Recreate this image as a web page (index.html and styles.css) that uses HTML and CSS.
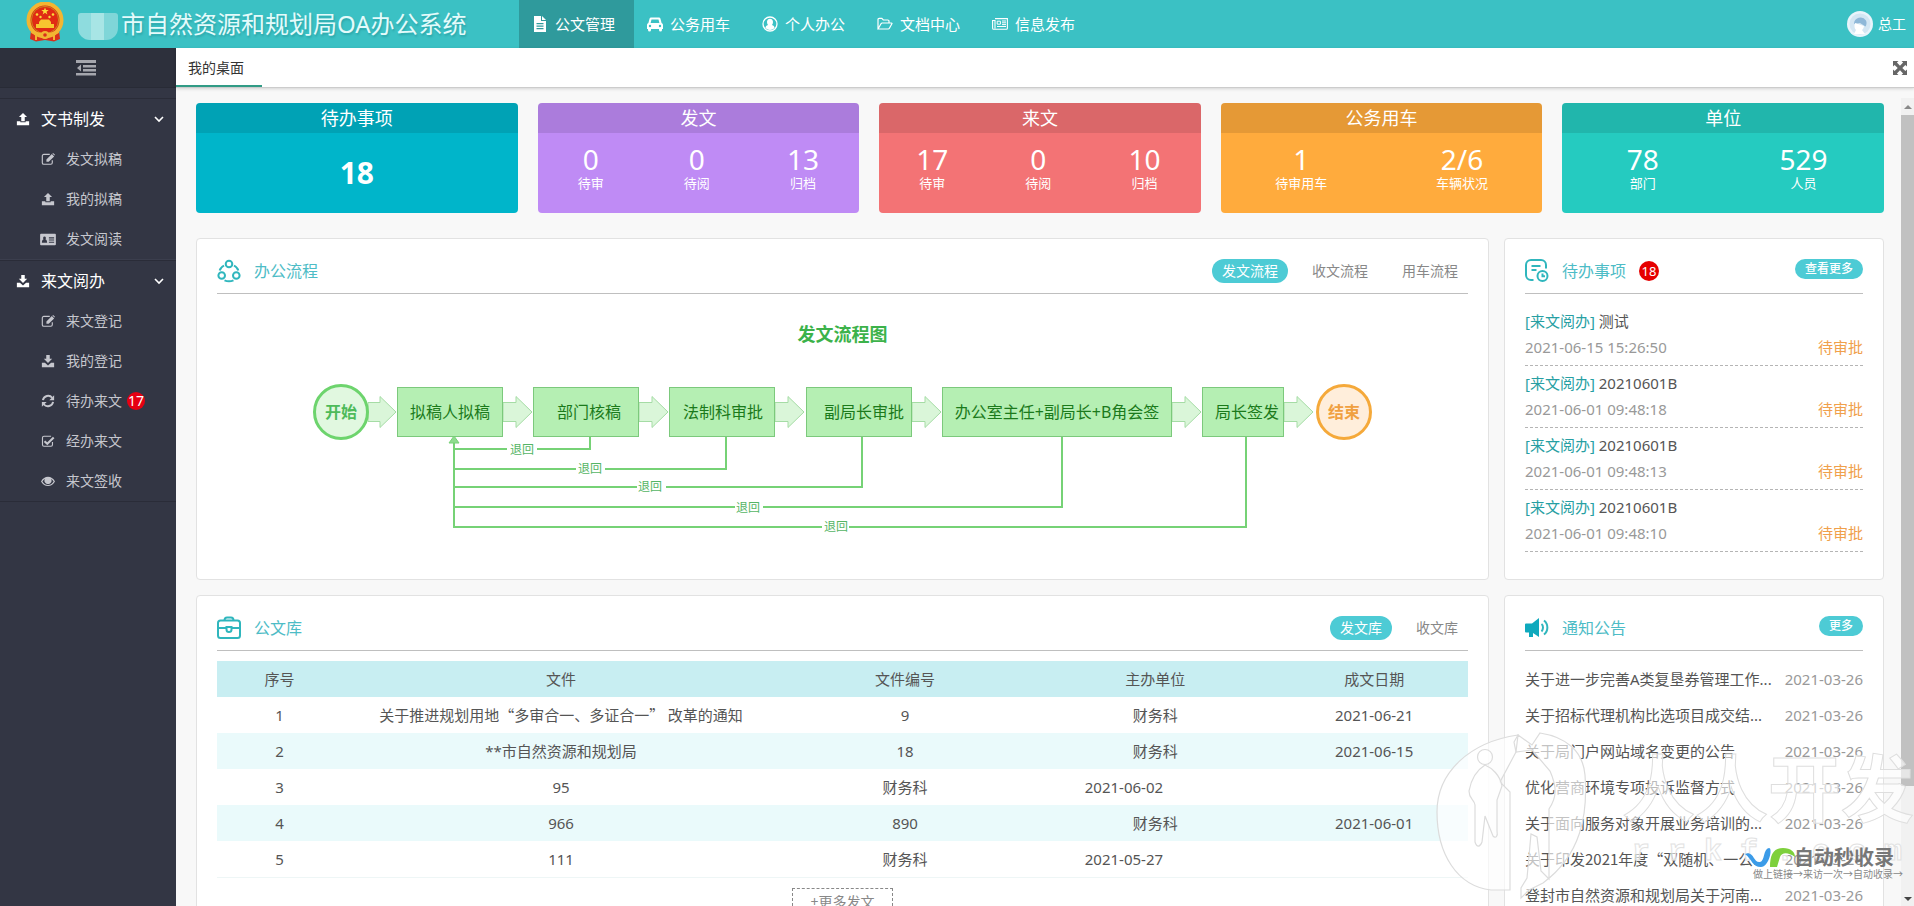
FILE: index.html
```html
<!DOCTYPE html>
<html lang="zh-CN">
<head>
  <meta charset="UTF-8" />
  <title>市自然资源和规划局OA办公系统</title>
  <link rel="stylesheet" href="styles.css">
</head>
<body>

<!-- 图标 -->
<svg class="sprite" aria-hidden="true">
  <symbol id="i-upload" viewBox="0 0 16 16"><path d="M8 1l4.600 4.800H10V10.500H6V5.800H3.400zM1 10.500h4v1.300h6v-1.300h4V15H1z"/></symbol>
  <symbol id="i-download" viewBox="0 0 16 16"><path d="M6 1h4v4.500h2.800L8 10.200 3.200 5.500H6zM1 10h3.500L8 13l3.500-3H15v5H1z"/></symbol>
  <symbol id="i-edit" viewBox="0 0 16 16"><path d="M10 2.700H3.200A1.700 1.700 0 0 0 1.500 4.400v8A1.700 1.700 0 0 0 3.200 14h8a1.700 1.700 0 0 0 1.700-1.700V9.500" fill="none" stroke="currentColor" stroke-width="1.300"/><path d="M6.200 11.200V8.600l6.200-6.200 2.600 2.600-6.200 6.200zM13 1.800l.8-.8 2.200 2.200-.8.900z"/></symbol>
  <symbol id="i-card" viewBox="0 0 18 16"><path fill-rule="evenodd" d="M1 2h16a1 1 0 0 1 1 1v11a1 1 0 0 1-1 1H1a1 1 0 0 1-1-1v-11a1 1 0 0 1 1-1zM10 6v1.300h6V6zM10 8.500v1.300h6V8.500zM10 11v1.200h6V11zM5 5.200a1.700 1.700 0 0 0-1 3c-1.500.4-2 1.800-2 4h6c0-2.200-.5-3.600-2-4a1.700 1.700 0 0 0-1-3z"/></symbol>
  <symbol id="i-refresh" viewBox="0 0 16 16"><path d="M2.200 7A6 6 0 0 1 12.800 4.300M13.800 9A6 6 0 0 1 3.200 11.700" fill="none" stroke="currentColor" stroke-width="2.200"/><path d="M15 1.500V7H9.500zM1 14.500V9h5.500z"/></symbol>
  <symbol id="i-check" viewBox="0 0 16 16"><path d="M11.500 2.600H3.400A1.700 1.700 0 0 0 1.700 4.300v8A1.700 1.700 0 0 0 3.400 14h8a1.700 1.700 0 0 0 1.700-1.700V9" fill="none" stroke="currentColor" stroke-width="1.300"/><path d="M4 8.200l3.200 3L14.500 4" fill="none" stroke="currentColor" stroke-width="2.400"/></symbol>
  <symbol id="i-eye" viewBox="0 0 16 16"><path fill-rule="evenodd" d="M0 8.500C2 5 4.800 3.200 8 3.200s6 1.800 8 5.300c-2 3.400-4.800 5.200-8 5.200S2 11.900 0 8.500zM1.600 8.500C3.200 11.200 5.500 12.500 8 12.500s4.800-1.300 6.400-4c-.8-1.400-1.900-2.500-3-3.200a4 4 0 1 1-6.800 0c-1.100.7-2.200 1.800-3 3.200z"/></symbol>
  <symbol id="i-chevron" viewBox="0 0 10 10"><path d="M1 3l4 4 4-4" fill="none" stroke="currentColor" stroke-width="1.600"/></symbol>
</svg>

<header class="header">
  <div class="brand">
    <svg class="emblem" viewBox="0 0 38 40" aria-hidden="true">
      <path d="M5 28h28l1 9-6 2.500-9-1.500-9 1.500L4 37z" fill="#d9301c"/>
      <circle cx="19" cy="18" r="16.500" fill="#e02a14" stroke="#f2b632" stroke-width="4"/>
      <circle cx="19" cy="18" r="13.600" fill="none" stroke="#c98a1c" stroke-width="1"/>
      <path d="M19 5.500l1 2.600h2.700l-2.200 1.600.9 2.700-2.400-1.700-2.400 1.700.9-2.700-2.200-1.600H18z" fill="#fbdc3c"/>
      <g fill="#fbdc3c"><circle cx="11" cy="12.500" r="1.300"/><circle cx="27" cy="12.500" r="1.300"/><circle cx="14.500" cy="15" r="1.200"/><circle cx="23.500" cy="15" r="1.200"/></g>
      <path d="M13 20l2-2.500h8l2 2.500v2h3v4H10v-4h3z" fill="#f7c62f"/>
      <path d="M6 28c8 4 18 4 26 0l1 3c-9 4-19 4-28 0z" fill="#f2b632"/>
      <circle cx="19" cy="33" r="4" fill="#f2b632"/><circle cx="19" cy="33" r="1.800" fill="#d9301c"/>
      <path d="M10 33v5M28 33v5" stroke="#f2b632" stroke-width="2"/>
    </svg>
    <span class="mosaic"></span>
    <h1 class="title">市自然资源和规划局OA办公系统</h1>
  </div>
  <nav class="nav">
    <a class="nav-item active" href="#">
      <svg class="nav-icon" viewBox="0 0 16 16"><path fill-rule="evenodd" d="M2 0h7v5h5v11H2zM10 0l4 4h-4zM4.500 7v1.200h7V7zM4.500 9.500v1.200h7V9.500zM4.500 12v1.200h7V12z"/></svg>公文管理</a>
    <a class="nav-item" href="#">
      <svg class="nav-icon" viewBox="0 0 16 16"><path fill-rule="evenodd" d="M4 1.500h8a1.500 1.500 0 0 1 1.400 1L14.600 7A2 2 0 0 1 16 9v4h-1v1a1.500 1.500 0 0 1-3 0v-1H4v1a1.500 1.500 0 0 1-3 0v-1H0V9a2 2 0 0 1 1.400-2l1.200-4.500a1.500 1.500 0 0 1 1.400-1zM4.500 3.500L3.600 7h8.800l-.9-3.500zM3 8.800a1.200 1.200 0 1 0 0 2.400 1.200 1.200 0 0 0 0-2.400zM13 8.800a1.200 1.200 0 1 0 0 2.400 1.200 1.200 0 0 0 0-2.400z"/></svg>公务用车</a>
    <a class="nav-item" href="#">
      <svg class="nav-icon" viewBox="0 0 16 16"><circle cx="8" cy="8" r="7" fill="none" stroke="currentColor" stroke-width="1.300"/><path d="M8 2.800c1.900 0 3 1.300 3 3.300 0 1.200-.4 2.200-1 2.900 1.600.4 2.400 1.500 2.600 3A6.400 6.400 0 0 1 8 14a6.400 6.400 0 0 1-4.600-2c.2-1.500 1-2.600 2.600-3-.6-.7-1-1.700-1-2.900 0-2 1.100-3.300 3-3.300z"/></svg>个人办公</a>
    <a class="nav-item" href="#">
      <svg class="nav-icon" viewBox="0 0 16 16"><path d="M1 13V3.500A1.200 1.200 0 0 1 2.200 2.300h2.600L6.300 4h4.500A1.200 1.200 0 0 1 12 5.200V7M1 13l3-5.300q.4-.7 1.200-.7h9.300q.8 0 .4.700l-2.500 4.600q-.4.700-1.200.7z" fill="none" stroke="currentColor" stroke-width="1.200"/></svg>文档中心</a>
    <a class="nav-item" href="#">
      <svg class="nav-icon" viewBox="0 0 16 16"><path d="M3 2.600h12.400v9.700a1 1 0 0 1-1 1H1.600a1 1 0 0 1-1-1V4.500H3v8" fill="none" stroke="currentColor" stroke-width="1.100"/><path d="M5.200 5.200h3.200v3H5.200zM5 10.500h9M10 5h4M10 6.800h4M10 8.600h4" fill="none" stroke="currentColor" stroke-width="1"/></svg>信息发布</a>
  </nav>
  <a class="user" href="#">
    <svg class="avatar" viewBox="0 0 26 26" aria-hidden="true">
      <circle cx="13" cy="13" r="13" fill="#e9f4fb"/><circle cx="13" cy="13" r="10.500" fill="#d3e6f3"/>
      <path d="M7 13a6.500 6.500 0 0 1 12-3.500c1 2 .5 4.500-.5 6L13 12z" fill="#8fb8d8"/><path d="M8 12l9 3c-.5 3-2 4-2 4l3 4H7l2-4c-1.500-1.500-2-4-1-7z" fill="#fff"/>
    </svg>总工</a>
</header>

<div class="body">
  <aside class="sidebar">
    <button class="collapse" aria-label="收起菜单">
      <svg viewBox="0 0 20 16"><path d="M0 0h20v3H0zM7 5h13v2.500H7zM7 9h13v2.500H7zM0 13h20v2.500H0zM5 4.500v7L1 8z"/></svg>
    </button>
    <ul class="menu">
      <li class="group">
        <a class="group-title" href="#"><svg class="icon"><use href="#i-upload"/></svg>文书制发<svg class="chevron"><use href="#i-chevron"/></svg></a>
        <a class="sub" href="#"><svg class="icon"><use href="#i-edit"/></svg>发文拟稿</a>
        <a class="sub" href="#"><svg class="icon"><use href="#i-upload"/></svg>我的拟稿</a>
        <a class="sub" href="#"><svg class="icon"><use href="#i-card"/></svg>发文阅读</a>
      </li>
      <li class="group">
        <a class="group-title" href="#"><svg class="icon"><use href="#i-download"/></svg>来文阅办<svg class="chevron"><use href="#i-chevron"/></svg></a>
        <a class="sub" href="#"><svg class="icon"><use href="#i-edit"/></svg>来文登记</a>
        <a class="sub" href="#"><svg class="icon"><use href="#i-download"/></svg>我的登记</a>
        <a class="sub" href="#"><svg class="icon"><use href="#i-refresh"/></svg>待办来文<span class="count">17</span></a>
        <a class="sub" href="#"><svg class="icon"><use href="#i-check"/></svg>经办来文</a>
        <a class="sub" href="#"><svg class="icon"><use href="#i-eye"/></svg>来文签收</a>
      </li>
    </ul>
  </aside>

  <div class="workspace">
    <div class="tabbar">
      <a class="tab" href="#">我的桌面</a>
      <button class="expand" aria-label="全屏">
        <svg viewBox="0 0 14 14"><path d="M0 0h5.500L3.900 1.600 7 4.700l3.100-3.100L8.500 0H14v5.500l-1.600-1.600L9.300 7l3.100 3.100L14 8.500V14H8.500l1.600-1.600L7 9.300l-3.100 3.100L5.500 14H0V8.500l1.600 1.600L4.700 7 1.600 3.900 0 5.500z"/></svg>
      </button>
    </div>

    <div class="frame">
      <main class="desk">
        <!-- 统计 -->
        <section class="stats">
          <div class="stat cyan">
            <h2>待办事项</h2>
            <div class="stat-body"><strong>18</strong></div>
          </div>
          <div class="stat purple">
            <h2>发文</h2>
            <div class="stat-body third">
              <div class="num"><b>0</b><span>待审</span></div>
              <div class="num"><b>0</b><span>待阅</span></div>
              <div class="num"><b>13</b><span>归档</span></div>
            </div>
          </div>
          <div class="stat red">
            <h2>来文</h2>
            <div class="stat-body third">
              <div class="num"><b>17</b><span>待审</span></div>
              <div class="num"><b>0</b><span>待阅</span></div>
              <div class="num"><b>10</b><span>归档</span></div>
            </div>
          </div>
          <div class="stat orange">
            <h2>公务用车</h2>
            <div class="stat-body half">
              <div class="num"><b>1</b><span>待审用车</span></div>
              <div class="num"><b>2/6</b><span>车辆状况</span></div>
            </div>
          </div>
          <div class="stat green">
            <h2>单位</h2>
            <div class="stat-body half">
              <div class="num"><b>78</b><span>部门</span></div>
              <div class="num"><b>529</b><span>人员</span></div>
            </div>
          </div>
        </section>

        <section class="panels">
          <!-- 办公流程 -->
          <div class="panel">
            <div class="panel-head">
              <svg class="panel-icon" viewBox="0 0 24 24">
                <circle cx="12" cy="5" r="3.300"/><circle cx="4.700" cy="16.500" r="3.300"/><circle cx="19.300" cy="16.500" r="3.300"/>
                <path d="M7 6.500c-2.500 1.500-4 3.500-4.300 5M17 6.500c2.500 1.500 4 3.500 4.300 5M7.500 21.300c3 1.300 6 1.300 9 0"/>
              </svg>
              <h3>办公流程</h3>
              <div class="switch">
                <button class="pill on">发文流程</button>
                <button class="pill">收文流程</button>
                <button class="pill">用车流程</button>
              </div>
            </div>
            <h4 class="flow-title">发文流程图</h4>
            <svg class="flow" width="1061" height="160" viewBox="0 0 1061 160">
              <g class="arrow">
                <path d="M56 22.500h12v-6l16 15.500-16 15.500v-6H56z"/>
                <path d="M191 22.500h13v-6l16 15.500-16 15.500v-6h-13z"/>
                <path d="M327 22.500h13v-6l16 15.500-16 15.500v-6h-13z"/>
                <path d="M463 22.500h13v-6l16 15.500-16 15.500v-6h-13z"/>
                <path d="M600 22.500h13v-6l16 15.500-16 15.500v-6h-13z"/>
                <path d="M860 22.500h13v-6l16 15.500-16 15.500v-6h-13z"/>
                <path d="M972 22.500h13v-6l16 15.500-16 15.500v-6h-13z"/>
              </g>
              <circle class="start" cx="29" cy="32" r="26.500"/>
              <circle class="end" cx="1032" cy="32" r="26.500"/>
              <g class="node">
                <rect x="85.500" y="7.500" width="105" height="49"/>
                <rect x="221.500" y="7.500" width="105" height="49"/>
                <rect x="357.500" y="7.500" width="105" height="49"/>
                <rect x="494.500" y="7.500" width="105" height="49"/>
                <rect x="630.500" y="7.500" width="229" height="49"/>
                <rect x="890.500" y="7.500" width="81" height="49"/>
              </g>
              <g class="back">
                <path d="M142 62v85h792V57M142 69h136V57M142 89h272V57M142 107h408V57M142 127h608V57"/>
              </g>
              <path class="tip" d="M142 56l5 7h-10z"/>
              <g class="gap">
                <rect x="195" y="62" width="30" height="14"/><rect x="264" y="82" width="29" height="14"/>
                <rect x="325" y="100" width="29" height="14"/><rect x="423" y="120" width="28" height="14"/>
                <rect x="510" y="140" width="27" height="14"/>
              </g>
              <g class="label">
                <text x="138" y="38">拟稿人拟稿</text><text x="277" y="38">部门核稿</text>
                <text x="411" y="38">法制科审批</text><text x="552" y="38">副局长审批</text>
                <text x="745" y="38">办公室主任+副局长+B角会签</text><text x="935" y="38">局长签发</text>
              </g>
              <text class="start-text" x="29" y="38">开始</text>
              <text class="end-text" x="1032" y="38">结束</text>
              <g class="back-label">
                <text x="210" y="74">退回</text><text x="278" y="93">退回</text><text x="338" y="111">退回</text>
                <text x="436" y="132">退回</text><text x="524" y="151">退回</text>
              </g>
            </svg>
          </div>

          <!-- 待办事项 -->
          <div class="panel">
            <div class="panel-head">
              <svg class="panel-icon" viewBox="0 0 24 24">
                <path d="M8.500 21H6a5 5 0 0 1-5-5V6a5 5 0 0 1 5-5h10a5 5 0 0 1 5 5v3.500M6.500 7h9M6.500 11h5"/>
                <circle cx="17.500" cy="17" r="5"/><path d="M17.500 14.500v2.800h2.500"/>
              </svg>
              <h3>待办事项</h3>
              <span class="badge">18</span>
              <button class="more">查看更多</button>
            </div>
            <ul class="todo">
              <li><p><a href="#">[来文阅办]</a> 测试</p><p class="meta"><time>2021-06-15 15:26:50</time><em>待审批</em></p></li>
              <li><p><a href="#">[来文阅办]</a> 20210601B</p><p class="meta"><time>2021-06-01 09:48:18</time><em>待审批</em></p></li>
              <li><p><a href="#">[来文阅办]</a> 20210601B</p><p class="meta"><time>2021-06-01 09:48:13</time><em>待审批</em></p></li>
              <li><p><a href="#">[来文阅办]</a> 20210601B</p><p class="meta"><time>2021-06-01 09:48:10</time><em>待审批</em></p></li>
            </ul>
          </div>

          <!-- 公文库 -->
          <div class="panel">
            <div class="panel-head">
              <svg class="panel-icon" viewBox="0 0 24 24">
                <rect x="1" y="4.500" width="22" height="17.500" rx="2.500"/>
                <path d="M7.500 4.500c0-2 1-3 2.500-3h4c1.500 0 2.500 1 2.500 3M1 12h8.500M14.500 12H23M9.500 11v2.500a2.500 2.500 0 0 0 5 0V11z"/>
              </svg>
              <h3>公文库</h3>
              <div class="switch">
                <button class="pill on">发文库</button>
                <button class="pill">收文库</button>
              </div>
            </div>
            <table class="docs">
              <thead>
                <tr><th class="no">序号</th><th class="name">文件</th><th class="code">文件编号</th><th class="dept">主办单位</th><th class="date">成文日期</th></tr>
              </thead>
              <tbody>
                <tr><td class="no">1</td><td class="name quoted">关于推进规划用地“多审合一、多证合一” 改革的通知</td><td class="code">9</td><td class="dept">财务科</td><td class="date">2021-06-21</td></tr>
                <tr><td class="no">2</td><td class="name">**市自然资源和规划局</td><td class="code">18</td><td class="dept">财务科</td><td class="date">2021-06-15</td></tr>
                <tr><td class="no">3</td><td class="name">95</td><td class="dept">财务科</td><td class="date">2021-06-02</td></tr>
                <tr><td class="no">4</td><td class="name">966</td><td class="code">890</td><td class="dept">财务科</td><td class="date">2021-06-01</td></tr>
                <tr><td class="no">5</td><td class="name">111</td><td class="dept">财务科</td><td class="date">2021-05-27</td></tr>
              </tbody>
            </table>
            <button class="load-more">+更多发文</button>
          </div>

          <!-- 通知公告 -->
          <div class="panel">
            <div class="panel-head">
              <svg class="panel-icon" viewBox="0 0 24 24">
                <path class="horn" d="M1 7.500h6L14 2v19l-6-4v4H4v-4.500H1a1 1 0 0 1-1-1v-7a1 1 0 0 1 1-1z"/>
                <path d="M16.500 8c2 1.500 2 5.500 0 7.500M19 4.500c4.500 3.500 4.500 10.500 0 14"/>
              </svg>
              <h3>通知公告</h3>
              <button class="more">更多</button>
            </div>
            <ul class="notice">
              <li><a href="#">关于进一步完善A类复垦券管理工作...</a><time>2021-03-26</time></li>
              <li><a href="#">关于招标代理机构比选项目成交结...</a><time>2021-03-26</time></li>
              <li><a href="#">关于局门户网站域名变更的公告</a><time>2021-03-26</time></li>
              <li><a href="#">优化营商环境专项投诉监督方式</a><time>2021-03-26</time></li>
              <li><a href="#">关于面向服务对象开展业务培训的...</a><time>2021-03-26</time></li>
              <li><a class="quoted" href="#">关于印发2021年度“双随机、一公...</a><time>2021-03-26</time></li>
              <li><a href="#">登封市自然资源和规划局关于河南...</a><time>2021-03-26</time></li>
            </ul>
          </div>
        </section>
      </main>

      <div class="scrollbar" aria-hidden="true">
        <span class="scroll-up"></span>
        <span class="scroll-thumb"></span>
        <span class="scroll-down"></span>
      </div>
    </div>
  </div>
</div>

<!-- 水印 -->
<svg class="watermark" width="484" height="186" viewBox="0 0 484 186" aria-hidden="true">
  <g fill="#fff" fill-opacity=".65" stroke="#dcdcdc" stroke-width="1.200">
    <path d="M88 15C40 22 7 52 7 92c0 42 20 74 54 78h19V72L70 62 86 32l-2-10z"/>
    <path d="M88 15l14 10 8-12c26 4 43 18 45 42 3 40-4 80-42 108l-14 7-8 8V168l6-10 4-44 6 3 4 34 8 8 0-70c8-12 8-22 1-38L102 30 86 32z"/>
    <circle cx="55" cy="37" r="7.500"/>
    <path d="M55 45c-8 5-14 15-16 26 0 8 5 8 6 14v37c2 6 5 5 7 0l3-26 8 20c3 3 5 0 4-5V80l5-14C70 55 62 48 55 45z"/>
  </g>
  <text class="wm-name" x="192" y="96">人人开发</text>
  <text class="wm-site" x="202" y="140">r r k f . c o m</text>
  <path d="M315 134c9-4 8 9 15 8 5-1 3-13 9-14 4 0 0 19-8 19-9 0-9-8-16-13z" fill="#3b9be8"/>
  <path d="M340 147c0-13 4-19 13-19 8 0 12 4 12 9-7-5-13-5-15 0l-3 10z" fill="#7ed03c"/>
  <text class="logo-name" x="364" y="145">自动秒收录</text>
  <text class="logo-sub" x="323" y="158">做上链接→来访一次→自动收录→</text>
</svg>

</body>
</html>
```
FILE: styles.css
```css
* {
  box-sizing: border-box;
  margin: 0;
  padding: 0;
}

body {
  height: 100vh;
  display: flex;
  flex-direction: column;
  overflow: hidden;
  font-family: "Noto Sans", "Noto Sans CJK SC", sans-serif;
  font-size: 14px;
  line-height: 24px;
  color: #555;
  background: #f8f8f8;
}

a {
  color: inherit;
  text-decoration: none;
}

ul {
  list-style: none;
}

button {
  border: none;
  background: none;
  font: inherit;
  color: inherit;
  cursor: pointer;
}

svg {
  fill: currentColor;
  flex: none;
}

.sprite {
  position: absolute;
  width: 0;
  height: 0;
}

/* 顶部 */
.header {
  display: flex;
  flex: none;
  height: 48px;
  background: #3bc1c4;
  color: #fff;
}

.brand {
  display: flex;
  align-items: center;
  width: 519px;
  padding-left: 26px;
}

.emblem {
  width: 38px;
  height: 40px;
  margin-bottom: 4px;
}

.mosaic {
  width: 40px;
  height: 27px;
  margin: 4px 3px 0 14px;
  border-radius: 3px 3px 12px 12px;
  background: linear-gradient(90deg, #8edcde 32%, #a8e5e5 32%, #a8e5e5 64%, #7fd6d8 64%);
}

.title {
  font-size: 24px;
  font-weight: normal;
  line-height: 48px;
  color: #e4fbfb;
  text-shadow: 1px 2px 2px rgba(0,90,95,0.25);
  white-space: nowrap;
}

.nav {
  display: flex;
  flex: 1;
}

.nav-item {
  display: flex;
  align-items: center;
  width: 115px;
  padding-left: 13px;
  font-size: 15px;
  white-space: nowrap;
}

.nav-item.active {
  background: #2f9a9c;
}

.nav-icon {
  width: 16px;
  height: 16px;
  margin-right: 7px;
}

.user {
  display: flex;
  align-items: center;
  gap: 5px;
  padding-right: 8px;
}

.avatar {
  width: 26px;
  height: 26px;
}

.body {
  display: flex;
  flex: 1;
  min-height: 0;
}

/* 左侧菜单 */
.sidebar {
  flex: none;
  width: 176px;
  background: #333644;
  color: #fff;
}

.collapse {
  display: flex;
  align-items: center;
  justify-content: center;
  width: 100%;
  height: 40px;
  padding-right: 4px;
  background: #2d303c;
  border-bottom: 1px solid #282b36;
  color: #a5a6ad;
}

.collapse svg {
  width: 20px;
  height: 16px;
}

.menu {
  padding-top: 10px;
}

.group {
  border-top: 1px solid #2a2c38;
  border-bottom: 1px solid #3b3e4d;
}

.group:last-child {
  border-bottom-color: #2a2c38;
}

.group-title {
  display: flex;
  align-items: center;
  height: 40px;
  padding: 0 12px 0 15px;
  font-size: 16px;
}

.group-title .icon {
  margin-right: 10px;
}

.chevron {
  width: 10px;
  height: 10px;
  margin-left: auto;
}

.icon {
  width: 16px;
  height: 14px;
}

.sub {
  display: flex;
  align-items: center;
  height: 40px;
  padding-left: 40px;
  color: #c6c7ce;
}

.sub .icon {
  margin-right: 10px;
}

.count {
  width: 18px;
  height: 18px;
  margin-left: 5px;
  border-radius: 9px;
  background: #e60012;
  color: #fff;
  line-height: 18px;
  text-align: center;
}

/* 标签栏 */
.workspace {
  display: flex;
  flex: 1;
  flex-direction: column;
  min-width: 0;
}

.tabbar {
  display: flex;
  flex: none;
  justify-content: space-between;
  height: 40px;
  margin-bottom: 10px;
  padding-right: 7px;
  background: #fff;
  border-bottom: 1px solid #ccc;
  box-shadow: 0 1px 3px rgba(0,0,0,0.15);
}

.tab {
  padding: 0 18px 0 12px;
  border-bottom: 2px solid #319b86;
  color: #333;
  line-height: 39px;
}

.expand {
  display: flex;
  align-items: center;
  color: #666;
}

.expand svg {
  width: 14px;
  height: 14px;
}

.frame {
  display: flex;
  flex: 1;
  min-height: 0;
}

.desk {
  flex: 1;
  min-width: 0;
  padding: 5px 17px 0 20px;
  overflow: hidden;
}

/* 统计卡片 */
.stats {
  display: grid;
  grid-template-columns: repeat(5, 1fr);
  gap: 20px;
  margin-bottom: 25px;
}

.stat {
  height: 110px;
  border-radius: 4px;
  overflow: hidden;
  color: #fff;
}

.stat h2 {
  height: 30px;
  background: rgba(0,0,0,0.1);
  font-size: 18px;
  font-weight: normal;
  line-height: 30px;
  text-align: center;
}

.stat-body {
  display: flex;
  height: 80px;
}

.stat-body strong {
  flex: 1;
  font-size: 30px;
  line-height: 80px;
  text-align: center;
}

.num {
  display: flex;
  flex-direction: column;
  padding-top: 11px;
  text-align: center;
}

.third .num {
  width: 33%;
}

.half .num {
  width: 50%;
}

.num b {
  font-size: 28px;
  font-weight: normal;
  line-height: 30px;
}

.num span {
  font-size: 13px;
  line-height: 18px;
}

.cyan {
  background: #00b5ca;
}

.purple {
  background: #bf8bf5;
}

.red {
  background: #f37375;
}

.orange {
  background: #ffab3d;
}

.green {
  background: #25cbc0;
}

/* 面板 */
.panels {
  display: grid;
  grid-template-columns: 1fr 380px;
  grid-template-rows: 342px auto;
  gap: 15px;
}

.panel {
  min-width: 0;
  padding: 0 20px;
  background: #fff;
  border: 1px solid #e2e2e2;
  border-radius: 4px;
}

.panel-head {
  display: flex;
  align-items: center;
  height: 55px;
  padding-top: 9px;
  border-bottom: 1px solid #bfbfbf;
}

.panel-icon {
  width: 24px;
  height: 24px;
  margin-right: 13px;
  fill: none;
  stroke: #2fb6bd;
  stroke-width: 2px;
}

.horn {
  fill: #0fa9bd;
  stroke: none;
}

.panel-head h3 {
  color: #4dbcc6;
  font-size: 16px;
  font-weight: normal;
}

.switch {
  display: flex;
  gap: 14px;
  margin-left: auto;
}

.pill {
  height: 24px;
  padding: 0 10px;
  border-radius: 12px;
  color: #888;
}

.pill.on {
  background: #4dcbd5;
  color: #fff;
}

.badge {
  width: 20px;
  height: 20px;
  margin-left: 13px;
  border-radius: 10px;
  background: #e60000;
  color: #fff;
  font-size: 13px;
  line-height: 20px;
  text-align: center;
}

.more {
  height: 20px;
  margin: 0 0 4px auto;
  padding: 0 10px;
  border-radius: 10px;
  background: #4dcbd5;
  color: #fff;
  font-size: 12px;
  font-weight: 500;
  line-height: 20px;
}

/* 流程图 */
.flow-title {
  margin-top: 28px;
  color: #3cb24a;
  font-size: 18px;
  line-height: 24px;
  text-align: center;
}

.flow {
  display: block;
  margin: 34px auto 0;
  overflow: visible;
  text-anchor: middle;
}

.arrow {
  fill: #daf6d9;
  stroke: #a5dca5;
}

.node {
  fill: #b5efb3;
  stroke: #7cc97c;
}

.start {
  fill: #e1f8e0;
  stroke: #6dd46d;
  stroke-width: 3px;
}

.end {
  fill: #ffeedb;
  stroke: #f5a93a;
  stroke-width: 3px;
}

.back {
  fill: none;
  stroke: #76d276;
  stroke-width: 2px;
}

.tip {
  fill: #8fdc8f;
  stroke: #76d276;
}

.gap {
  fill: #fff;
}

.label {
  fill: #1b7a1b;
  font-size: 16px;
}

.start-text {
  fill: #4dbb5a;
  font-size: 16px;
  font-weight: bold;
}

.end-text {
  fill: #f0a040;
  font-size: 16px;
  font-weight: bold;
}

.back-label {
  fill: #55b565;
  font-size: 12px;
}

/* 待办列表 */
.todo {
  padding-top: 10px;
  font-size: 15px;
  line-height: 26px;
}

.todo li {
  padding: 4px 0 5px;
  border-bottom: 1px dashed #b5b5b5;
}

.todo a {
  color: #279fa3;
}

.meta {
  display: flex;
  justify-content: space-between;
  color: #999;
}

.meta em {
  color: #f0a04b;
  font-style: normal;
}

/* 公文表格 */
.docs {
  display: block;
  margin-top: 10px;
  border-bottom: 1px solid #eef6f6;
  font-size: 15px;
  line-height: 36px;
  text-align: center;
}

.docs thead,
.docs tbody {
  display: block;
}

.docs tr {
  display: flex;
  height: 36px;
}

.docs th {
  font-weight: normal;
}

.docs thead tr {
  background: #c8eef2;
}

.docs tbody tr:nth-child(even) {
  background: #eafafb;
}

.no {
  width: 10%;
}

.name {
  width: 35%;
}

.code,
.dept {
  width: 20%;
}

.date {
  width: 15%;
}

/* 中文引号占全角 */
.quoted {
  font-family: "Noto Sans CJK SC", sans-serif;
}

.load-more {
  display: block;
  height: 28px;
  margin: 10px auto 20px;
  padding: 0 17px;
  border: 1px dashed #888;
  color: #888;
}

/* 公告列表 */
.notice {
  padding-top: 10px;
  font-size: 15px;
  line-height: 36px;
}

.notice li {
  display: flex;
  justify-content: space-between;
  height: 36px;
  white-space: nowrap;
}

.notice time {
  color: #999;
}

/* 滚动条 */
.scrollbar {
  display: flex;
  flex: none;
  flex-direction: column;
  align-items: center;
  width: 13px;
  background: #f1f1f1;
}

.scroll-up,
.scroll-down {
  width: 0;
  height: 0;
  border: 4px solid transparent;
}

.scroll-up {
  margin: 3px 0 6px;
  border-bottom-color: #888;
}

.scroll-down {
  margin: auto 0 1px;
  border-top-color: #444;
}

.scroll-thumb {
  width: 13px;
  height: 83%;
  background: #c1c1c1;
}

/* 水印 */
.watermark {
  position: absolute;
  right: 0;
  bottom: 0;
  pointer-events: none;
}

.wm-name {
  fill: #fff;
  fill-opacity: 0.6;
  stroke: #dedede;
  font-size: 73px;
  font-weight: bold;
}

.wm-site {
  fill: #fff;
  fill-opacity: 0.6;
  stroke: #e2e2e2;
  font-family: "Liberation Mono", monospace;
  font-size: 30px;
  font-weight: bold;
}

.logo-name {
  fill: #777;
  font-size: 20px;
  font-weight: bold;
}

.logo-sub {
  fill: #888;
  font-size: 10px;
}
```
